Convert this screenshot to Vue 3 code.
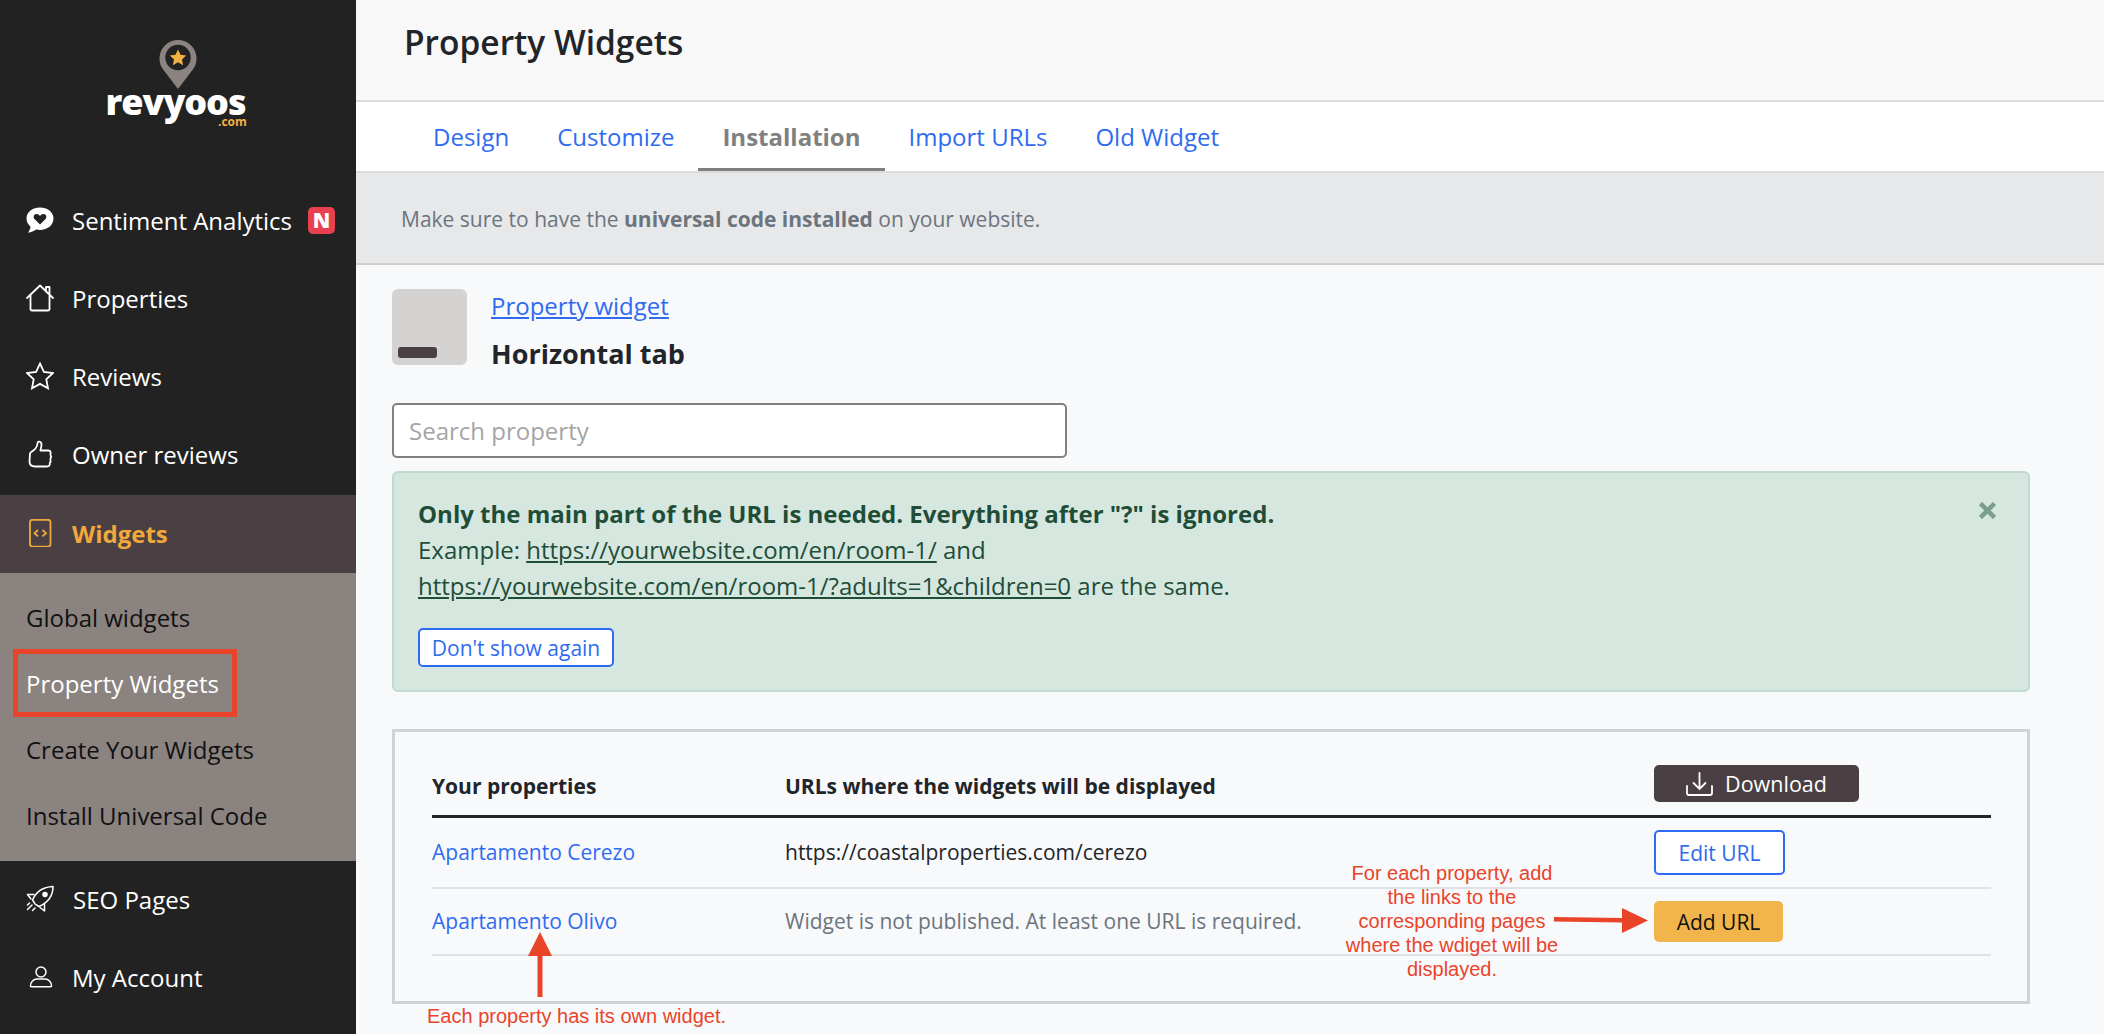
<script setup>
const tabs = ['Design', 'Customize', 'Installation', 'Import URLs', 'Old Widget']
const subItems = ['Global widgets', 'Property Widgets', 'Create Your Widgets', 'Install Universal Code']
</script>

<template>
  <div class="app">
    <aside class="sidebar">
      <div class="logo">
        <svg class="pin" width="38" height="50" viewBox="0 0 38 50">
          <path d="M19 50 L4.5 31 A18.5 18.5 0 1 1 33.5 31 Z" fill="#8b8380" />
          <circle cx="19" cy="18.5" r="12.7" fill="#222" />
          <path d="M19 10.4 l2.5 5.3 5.7.7 -4.2 4 1.1 5.8 -5.1-2.9 -5.1 2.9 1.1-5.8 -4.2-4 5.7-.7z" fill="#f2b142" />
        </svg>
        <div class="wordmark">revyoos</div>
        <div class="dotcom">.com</div>
      </div>

      <nav class="nav">
        <a class="item">
          <svg class="ico" viewBox="0 0 28 28">
            <path d="M14 1.5C6.5 1.5 0.500 6 0.500 12.500c0 3.300 1.600 6.200 4.100 8.200-.3 2-1.300 4.200-2.600 6 3-.4 6.300-1.700 8.200-3.100 1.200.3 2.500.4 3.800.4 7.500 0 13.500-5 13.500-11.500S21.500 1.500 14 1.500z" fill="#fff" />
            <path d="M14 18.500 l-5.500-5.500c-1.700-1.800-.7-5 2-5 1.500 0 2.700.8 3.500 2 .8-1.200 2-2 3.500-2 2.700 0 3.700 3.200 2 5z" fill="#222" />
          </svg>
          <span class="lbl">Sentiment Analytics</span>
          <span class="badge">N</span>
        </a>
        <a class="item">
          <svg class="ico line" viewBox="0 0 28 28">
            <path d="M1 14 L14 1.500 L27 14 M20 7.500 V3 h3.500 V11 M4.500 11.500 V25 a1.500 1.500 0 0 0 1.500 1.500 H22 a1.500 1.500 0 0 0 1.500 -1.500 V11.500" />
          </svg>
          <span class="lbl">Properties</span>
        </a>
        <a class="item">
          <svg class="ico line" viewBox="0 0 28 28">
            <path d="M14 1.500 l3.900 8.300 9.100 1.200 -6.700 6.300 1.700 9 -8-4.400 -8 4.400 1.700-9 -6.700-6.300 9.100-1.200z" stroke-linejoin="miter" />
          </svg>
          <span class="lbl">Reviews</span>
        </a>
        <a class="item">
          <svg class="ico line" viewBox="0 0 28 28">
            <path d="M4 13.500 c0-1 3.500-2.500 5.500-5 1.700-2.100 2-4 2.200-6 .1-1.500 3.200-1.300 3.700 1 .5 2.300-.4 5-1 7 h8 c2.300 0 2.600 2.300 2 4 .9 1.500.7 3.500 0 4.500.4 1.500.4 3-.6 4 .4 2.400-1 3.500-3 3.500 H9 c-3 0-5.500-1.500-5.500-5z" />
          </svg>
          <span class="lbl">Owner reviews</span>
        </a>
        <a class="item active">
          <svg class="ico orange" viewBox="0 0 28 28">
            <rect x="4" y="0.800" width="20.500" height="26.800" rx="2.500" />
            <path d="M12 11 l-3.500 3.200 3.500 3.200 M16.500 11 l3.500 3.200 -3.500 3.200" />
          </svg>
          <span class="lbl">Widgets</span>
        </a>
        <div class="sub">
          <a v-for="(s, i) in subItems" :key="s" class="sub-item" :class="{ on: i === 1 }">{{ s }}</a>
        </div>
        <a class="item">
          <svg class="ico line thin" viewBox="0 0 28 28">
            <path d="M9 19 C8 17 7.500 16.500 6.500 15 C10 7 17 2 27 1.500 C27 11 21 18 13 21.500 C11.500 20.500 10.500 20 9 19z" />
            <circle cx="19" cy="9.500" r="2" fill="#fff" />
            <path d="M8 9.500 L1.500 9.500 L5 14 M18.500 19.500 L18.500 26 L14 22.500 M6 20 L1.500 24.500 M9 23 L6.500 25.500 M3.500 18 L1.500 20" />
          </svg>
          <span class="lbl seo">SEO Pages</span>
        </a>
        <a class="item">
          <svg class="ico line thin" viewBox="0 0 28 28">
            <circle cx="15" cy="9" r="5" />
            <path d="M4.500 23 c0-4 3-7 6.500-7 h8 c3.500 0 6.500 3 6.500 7 a.8 .8 0 0 1 -.8 .8 H5.300 a.8 .8 0 0 1 -.8 -.8z" />
          </svg>
          <span class="lbl">My Account</span>
        </a>
      </nav>
    </aside>

    <main class="main">
      <header class="title-bar"><h1>Property Widgets</h1></header>
      <div class="tabs">
        <a v-for="t in tabs" :key="t" class="tab" :class="{ current: t === 'Installation' }">{{ t }}</a>
      </div>
      <div class="notice">Make sure to have the <b>universal code installed</b> on your website.</div>

      <section class="content">
        <div class="widget-head">
          <div class="thumb"><span></span></div>
          <div class="head-text">
            <a class="widget-link">Property widget</a>
            <strong>Horizontal tab</strong>
          </div>
        </div>

        <input class="search" type="text" placeholder="Search property" />

        <div class="alert">
          <svg class="close" width="17" height="17" viewBox="0 0 17 17"><path d="M1.500 1.500 L15.500 15.500 M15.500 1.500 L1.500 15.500" /></svg>
          <p class="alert-title">Only the main part of the URL is needed. Everything after "?" is ignored.</p>
          <p>Example: <u>https://yourwebsite.com/en/room-1/</u> and</p>
          <p><u>https://yourwebsite.com/en/room-1/?adults=1&amp;children=0</u> are the same.</p>
          <button class="dont">Don't show again</button>
        </div>

        <div class="table-box">
          <div class="row head">
            <div class="c1">Your properties</div>
            <div class="c2">URLs where the widgets will be displayed</div>
            <div class="c3">
              <button class="download">
                <svg viewBox="0 0 27 24"><path d="M13.500 1 V17 M7.500 11 L13.500 17 L19.500 11 M1 14 V21 a2 2 0 0 0 2 2 H24 a2 2 0 0 0 2 -2 V14" /></svg>
                Download
              </button>
            </div>
          </div>
          <div class="row r1">
            <a class="c1 link">Apartamento Cerezo</a>
            <div class="c2">https://coastalproperties.com/cerezo</div>
            <div class="c3"><button class="edit">Edit URL</button></div>
          </div>
          <div class="row r2">
            <a class="c1 link">Apartamento Olivo</a>
            <div class="c2 muted">Widget is not published. At least one URL is required.</div>
            <div class="c3"><button class="add">Add URL</button></div>
          </div>
        </div>

        <!-- annotations drawn on top of the screenshot -->
        <div class="note note-right">For each property, add<br />the links to the<br />corresponding pages<br />where the wdiget will be<br />displayed.</div>
        <svg class="arrow arrow-right" width="94" height="25" viewBox="0 0 94 25"><path d="M0 9 L68 10 V0 L94 12.500 L68 25 V14.500 L0 13.500z" fill="#e9442a" /></svg>
        <svg class="arrow arrow-up" width="26" height="66" viewBox="0 0 26 66"><path d="M13 0 L25 24 H15.500 V65 H10.500 V24 H1z" fill="#e9442a" /></svg>
        <div class="note note-left">Each property has its own widget.</div>
      </section>
    </main>
    <div class="redbox"></div>
  </div>
</template>

<style>
html, body { margin: 0; padding: 0; background: #f8f9fb; }
</style>

<style scoped>
* { box-sizing: border-box; }
.app {
  position: relative;
  display: flex;
  width: 2104px;
  height: 1034px;
  overflow: hidden;
  font-family: "Open Sans", "Noto Sans", sans-serif;
  font-size: 24px;
  color: #212529;
}
.sidebar { width: 356px; flex: none; background: #222; color: #fff; }
.logo { position: relative; height: 182px; padding-top: 39px; display: flex; flex-direction: column; align-items: center; }
.pin { display: block; flex: none; }
.wordmark { font-size: 36px; font-weight: 800; line-height: 30px; margin: -2px 5px 0 0; letter-spacing: -1.100px; }
.dotcom { position: absolute; left: 218px; top: 114px; font-size: 12px; line-height: 16px; font-weight: 700; color: #f2b142; }
.nav { display: flex; flex-direction: column; }
.item { height: 78px; display: flex; align-items: center; padding: 0 0 2px 26px; color: #fff; }
.ico { width: 28px; height: 28px; flex: none; margin-right: 18px; }
.line { fill: none; stroke: #fff; stroke-width: 1.800; stroke-linejoin: round; stroke-linecap: round; }
.thin { stroke-width: 1.500; }
.orange { fill: none; stroke: #f2a93b; stroke-width: 1.800; }
.lbl { white-space: nowrap; }
.seo { margin-left: 1px; }
.badge {
  width: 27px; height: 27px; margin-left: 16px; background: #e8404f; border-radius: 5px;
  display: flex; align-items: center; justify-content: center; font-size: 21px; font-weight: 800; color: #fff;
}
.active { margin-top: 1px; background: #4a3f42; }
.active .lbl { color: #f2a93b; font-weight: 700; }
.sub { height: 288px; background: #8b8380; padding-top: 11px; display: flex; flex-direction: column; }
.sub-item { height: 66px; display: flex; align-items: center; padding-left: 26px; color: #111; }
.sub-item.on { color: #fff; }

.main { flex: 1; min-width: 0; background: #f8f9fb; }
.title-bar { height: 102px; background: #f8f8f8; border-bottom: 2px solid #dcdcdc; padding: 18px 0 0 48px; }
h1 { margin: 0; font-size: 33.500px; line-height: 48px; font-weight: 600; color: #212529; }
.tabs { height: 71px; background: #fff; display: flex; padding-left: 53px; border-bottom: 2px solid #dcdcdc; }
.tab { padding: 0 24px; line-height: 69px; height: 69px; color: #2f6bf0; }
.current { color: #808080; font-weight: 700; border-bottom: 3px solid #808080; }
.notice { height: 92px; background: #e7e8ea; border-bottom: 2px solid #cfcfcf; padding: 32px 0 0 45px; font-size: 21px; line-height: 28px; color: #6c757d; }

.content { position: relative; padding: 24px 74px 0 36px; }
.widget-head { display: flex; height: 76px; }
.thumb { position: relative; width: 75px; height: 76px; background: #d5d2d2; border-radius: 6px; }
.thumb span { position: absolute; left: 6px; top: 58px; width: 39px; height: 11px; background: #4a3f42; border-radius: 3px; }
.head-text { margin-left: 24px; display: flex; flex-direction: column; }
.widget-link { line-height: 34px; color: #2f6bf0; text-decoration: underline; }
.head-text strong { margin-top: 13px; font-size: 27px; line-height: 36px; font-weight: 700; color: #212529; }
.search {
  display: block; width: 675px; height: 55px; margin-top: 38px; padding: 0 15px;
  background: #fff; border: 2px solid #808080; border-radius: 5px; font: 24px "Open Sans", sans-serif; color: #212529; outline: none;
}
.search::placeholder { color: #a5a5a5; opacity: 1; }
.alert {
  position: relative; height: 221px; margin-top: 13px; padding: 23px 24px 0; background: #d5e7df; border: 2px solid #bfdbcf; border-radius: 6px;
  font-size: 24px; line-height: 36px; color: #1f4d38;
}
.alert p { margin: 0; }
.alert-title { font-weight: 700; }
.close { position: absolute; right: 32px; top: 29px; fill: none; stroke: #7c9e8e; stroke-width: 4.500; }
.dont {
  display: block; margin-top: 24px; width: 196px; height: 39px; padding: 0; background: #fff; border: 2px solid #2f6bf0; border-radius: 5px;
  font: 21px "Open Sans", sans-serif; color: #2f6bf0;
}
.table-box { height: 275px; margin-top: 37px; border: 3px solid #d0d2d6; padding: 33px 36px 0 37px; }
.row { display: flex; align-items: center; border-bottom: 2px solid #dfe1e6; font-size: 21px; }
.c1 { width: 353px; flex: none; }
.c2 { width: 869px; flex: none; }
.head { height: 53px; align-items: flex-start; border-bottom: 3px solid #212529; font-weight: 700; }
.head .c1, .head .c2 { line-height: 42px; }
.r1 { height: 71px; }
.r2 { height: 67px; }
.r1 .c1, .r1 .c2, .r2 .c1, .r2 .c2 { padding-bottom: 2px; }
.link { color: #2f6bf0; }
.muted { color: #6c757d; }
.download {
  width: 205px; height: 37px; display: flex; align-items: center; justify-content: center; gap: 12px; padding: 0;
  background: #4a3f42; border: 0; border-radius: 5px; font: 21.500px "Open Sans", sans-serif; color: #fff;
}
.download svg { width: 27px; height: 24px; fill: none; stroke: #fff; stroke-width: 1.800; stroke-linecap: round; }
.edit { display: block; width: 131px; height: 45px; padding: 0; background: #fff; border: 2px solid #2f6bf0; border-radius: 5px; font: 21px "Open Sans", sans-serif; color: #2f6bf0; }
.add { display: block; width: 129px; height: 41px; padding: 0; background: #f2b54b; border: 0; border-radius: 5px; font: 21px "Open Sans", sans-serif; color: #111; }
.note { position: absolute; font-family: "Liberation Sans", Arial, sans-serif; font-size: 20px; line-height: 24px; color: #e9442a; white-space: nowrap; }
.note-right { left: 906px; top: 596px; width: 380px; text-align: center; }
.note-left { left: 71px; top: 739px; }
.arrow { position: absolute; }
.arrow-right { left: 1198px; top: 643px; }
.arrow-up { left: 171px; top: 667px; }
.redbox { position: absolute; left: 13px; top: 649px; width: 224px; height: 68px; border: 5px solid #e9442a; }
</style>
